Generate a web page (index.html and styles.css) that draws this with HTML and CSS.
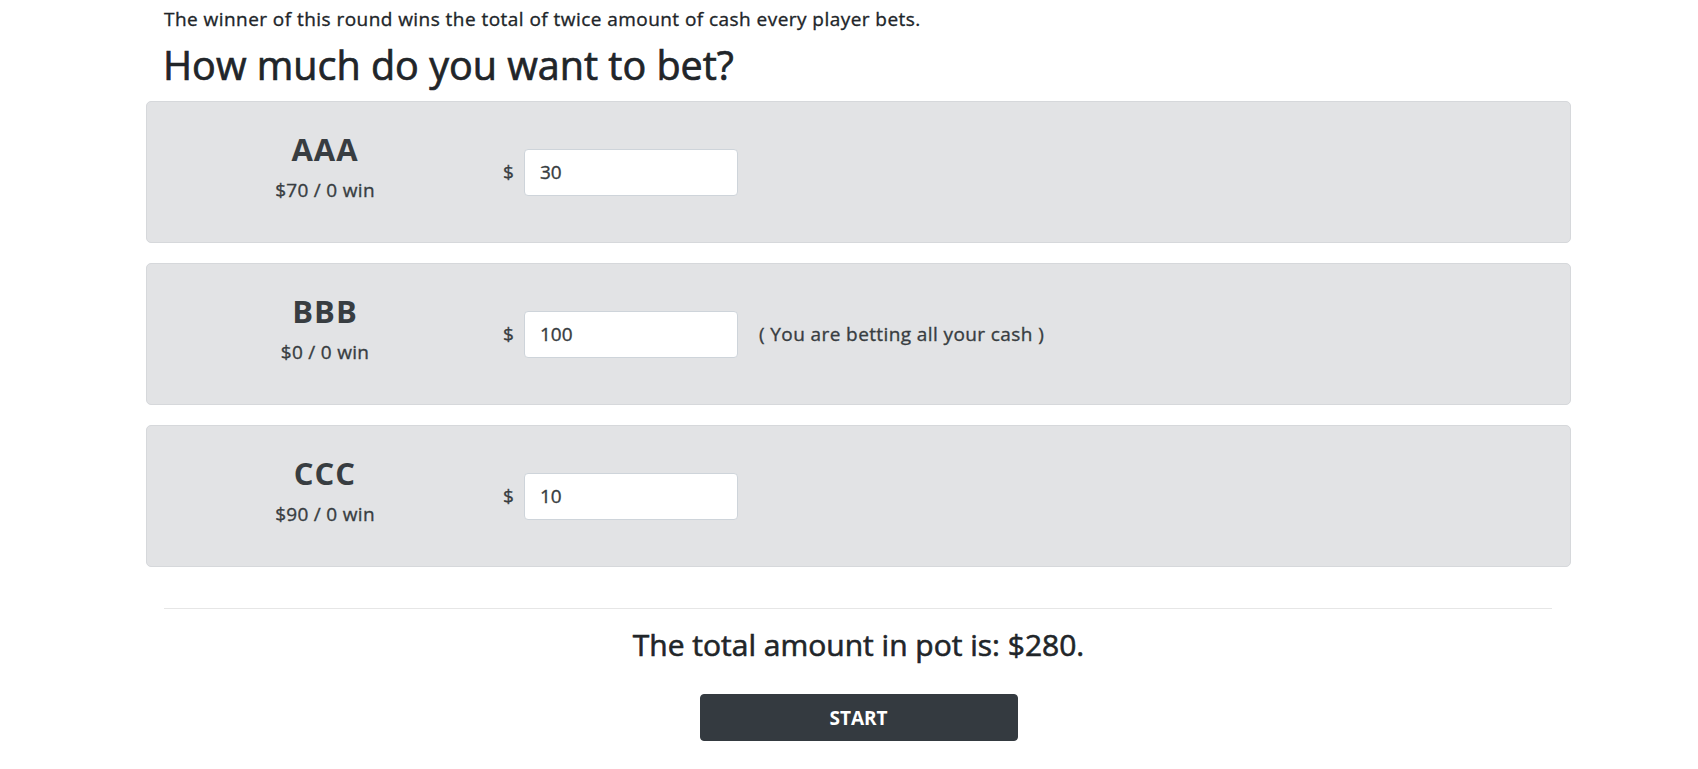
FILE: index.html
```html
<!DOCTYPE html>
<html>
<head>
<meta charset="utf-8">
<title>Bet</title>
<link rel="stylesheet" href="styles.css">
</head>
<body>
<div class="page">
  <p class="intro">The winner of this round wins the total of twice amount of cash every player bets.</p>
  <h1 class="title">How much do you want to bet?</h1>

  <div class="players">
    <div class="player">
      <div class="info">
        <div class="name">AAA</div>
        <div class="cash">$70 / 0 win</div>
      </div>
      <div class="bet">
        <span class="dollar">$</span>
        <input class="amount" type="text" value="30">
      </div>
    </div>

    <div class="player">
      <div class="info">
        <div class="name">BBB</div>
        <div class="cash">$0 / 0 win</div>
      </div>
      <div class="bet">
        <span class="dollar">$</span>
        <input class="amount" type="text" value="100">
        <span class="note">( You are betting all your cash )</span>
      </div>
    </div>

    <div class="player">
      <div class="info">
        <div class="name">CCC</div>
        <div class="cash">$90 / 0 win</div>
      </div>
      <div class="bet">
        <span class="dollar">$</span>
        <input class="amount" type="text" value="10">
      </div>
    </div>
  </div>

  <hr class="divider">
  <h2 class="total">The total amount in pot is: $280.</h2>
  <div class="actions">
    <button class="start" type="button">START</button>
  </div>
</div>
</body>
</html>
```

FILE: styles.css
```css
* { box-sizing: border-box; }

html, body {
  margin: 0;
  padding: 0;
  background: #ffffff;
}

body {
  font-family: "Open Sans", "Noto Sans", sans-serif;
  color: #212529;
}

.page {
  width: 1425px;
  margin-left: 146px;
  padding-top: 6px;
}

.intro {
  margin: 0;
  padding-left: 18px;
  font-size: 19px;
  line-height: 27px;
  letter-spacing: 0.45px;
  font-weight: 500;
  -webkit-text-stroke: 0.35px #212529;
}

.title {
  margin: 8px 0 12px;
  padding-left: 17px;
  font-size: 39.5px;
  line-height: 48px;
  font-weight: 500;
  -webkit-text-stroke: 0.7px #212529;
}

.players {
  display: flex;
  flex-direction: column;
  gap: 20px;
}

.player {
  height: 142px;
  background: #e2e3e5;
  border: 1px solid #d6d8db;
  border-radius: 5px;
  color: #383d41;
  display: flex;
  align-items: center;
}

.info {
  width: 356px;
  text-align: center;
  padding-bottom: 10px;
}

.name {
  font-size: 31px;
  line-height: 36px;
  font-weight: 700;
  letter-spacing: 1px;
  margin-bottom: 10px;
}

.cash {
  font-size: 19px;
  line-height: 27px;
  letter-spacing: 0.3px;
  font-weight: 500;
  -webkit-text-stroke: 0.35px #383d41;
}

.bet {
  display: flex;
  align-items: center;
}

.dollar {
  font-size: 19px;
  font-weight: 500;
  width: 21px;
  -webkit-text-stroke: 0.35px #383d41;
}

.amount {
  width: 214px;
  height: 47px;
  border: 1px solid #ced4da;
  border-radius: 4px;
  background: #ffffff;
  padding: 0 15px;
  font-family: "Open Sans", "Noto Sans", sans-serif;
  font-size: 19px;
  font-weight: 500;
  color: #383d41;
  -webkit-text-stroke: 0.35px #383d41;
  outline: none;
}

.note {
  margin-left: 21px;
  font-size: 19px;
  letter-spacing: 0.4px;
  font-weight: 500;
  -webkit-text-stroke: 0.35px #383d41;
}

.divider {
  margin: 41px 19px 0 18px;
  border: 0;
  border-top: 1px solid #e6e6e6;
  height: 0;
}

.total {
  margin: 17px 0 0;
  text-align: center;
  font-size: 30px;
  line-height: 38px;
  font-weight: 500;
  -webkit-text-stroke: 0.6px #212529;
}

.actions {
  display: flex;
  justify-content: center;
  margin-top: 30px;
}

.start {
  width: 318px;
  height: 47px;
  background: #343a40;
  color: #ffffff;
  border: 1px solid #343a40;
  border-radius: 4px;
  font-family: "Open Sans", "Noto Sans", sans-serif;
  font-size: 19px;
  font-weight: 700;
}
```
